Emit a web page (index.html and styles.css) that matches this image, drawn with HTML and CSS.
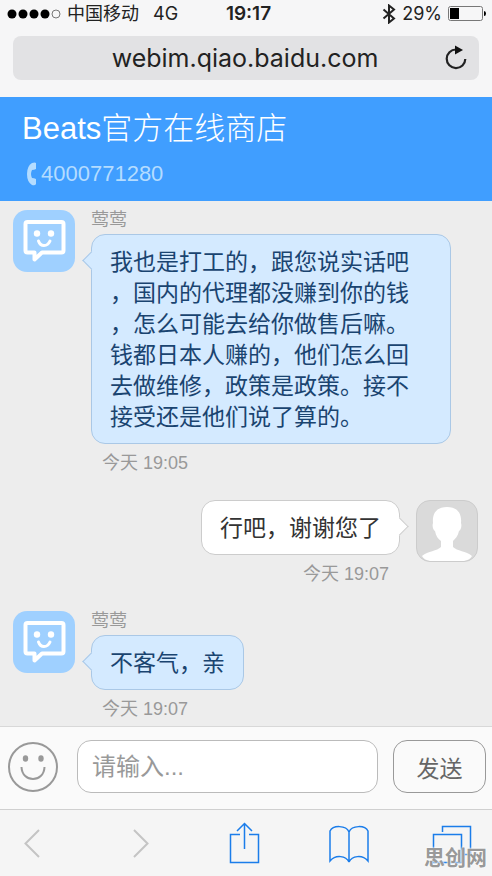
FILE: index.html
```html
<!DOCTYPE html>
<html lang="zh-CN">
<head>
<meta charset="utf-8">
<meta name="viewport" content="width=device-width, initial-scale=1">
<title>Beats官方在线商店</title>
<link rel="stylesheet" href="styles.css">
</head>
<body>
<svg class="defs" width="0" height="0" aria-hidden="true">
  <symbol id="bot" viewBox="0 0 62 62">
    <path d="M14.500 12H48.500Q50.500 12 50.500 14V40.500Q50.500 42.500 48.500 42.500H29L21.500 49.500V42.500H14.500Q12.500 42.500 12.500 40.500V14Q12.500 12 14.500 12Z" fill="none" stroke="#fff" stroke-width="4" stroke-linejoin="round"/>
    <circle cx="24" cy="23.500" r="3.200" fill="#fff"/>
    <circle cx="38" cy="23.500" r="3.200" fill="#fff"/>
    <path d="M25.500 31Q27 35.500 31 35.500T37 31" fill="none" stroke="#fff" stroke-width="3" stroke-linecap="round"/>
  </symbol>
</svg>

<div class="status">
  <div class="carrier">
    <svg width="54" height="12" viewBox="0 0 54 12" aria-hidden="true">
      <circle cx="5" cy="6" r="4.500"/><circle cx="16" cy="6" r="4.500"/><circle cx="27" cy="6" r="4.500"/><circle cx="38" cy="6" r="4.500"/>
      <circle cx="49" cy="6" r="4" fill="none" stroke="#777"/>
    </svg>
    <span>中国移动</span><span class="network">4G</span>
  </div>
  <time class="clock">19:17</time>
  <div class="power">
    <svg width="14" height="20" viewBox="0 0 14 20" aria-hidden="true"><path d="M1.500 5.500L12 14.500L7 18.500V1.500L12 5.500L1.500 14.500" fill="none" stroke="#222" stroke-width="2"/></svg>
    <span>29%</span>
    <svg width="38" height="16" viewBox="0 0 38 16" aria-hidden="true"><rect x=".5" y=".5" width="34" height="14" rx="2" fill="none" stroke="#777"/><rect x="2" y="2" width="9" height="11"/><path d="M36 5Q38 5 38 7.500T36 10Z"/></svg>
  </div>
</div>

<div class="address">
  <span class="url">webim.qiao.baidu.com</span>
  <button class="icon-button" type="button" aria-label="刷新">
    <svg width="24" height="26" viewBox="0 0 24 26"><path d="M12 4.500A9.300 9.300 0 1 0 21.300 14" fill="none" stroke="#222" stroke-width="2.200"/><path d="M11 .5L19 5L11 9.500Z" fill="#111"/></svg>
  </button>
</div>

<header class="shop">
  <h1>Beats官方在线商店</h1>
  <a class="phone" href="tel:4000771280"><svg width="11" height="24" viewBox="0 0 11 24" aria-hidden="true"><path d="M6 1Q9 0 10 1V7Q8 8 6 8Q4 12 6 16Q8 16 10 17V22Q9 24 6 23Q1 20 1 12T6 1Z" fill="#b4dcff"/></svg>4000771280</a>
</header>

<main class="chat">
  <article class="message">
    <div class="avatar"><svg width="62" height="62" aria-hidden="true"><use href="#bot"/></svg></div>
    <div class="content">
      <div class="name">莺莺</div>
      <div class="bubble">我也是打工的，跟您说实话吧<br>，国内的代理都没赚到你的钱<br>，怎么可能去给你做售后嘛。<br>钱都日本人赚的，他们怎么回<br>去做维修，政策是政策。接不<br>接受还是他们说了算的。</div>
      <time class="sent">今天 19:05</time>
    </div>
  </article>
  <article class="message mine">
    <div class="avatar"><svg width="60" height="60" viewBox="0 0 60 60" aria-hidden="true"><path d="M30 6C40 6 45 12 44 22C45 25 44 29 42 30C41 35 38 38 36 40V46C40 50 49 50 55 55Q53 59 47 60H13Q7 59 5 55C11 50 20 50 24 46V40C21 38 19 35 18 30C16 29 15 25 16 22C15 12 20 6 30 6Z" fill="#fff"/></svg></div>
    <div class="content">
      <div class="bubble">行吧，谢谢您了</div>
      <time class="sent">今天 19:07</time>
    </div>
  </article>
  <article class="message">
    <div class="avatar"><svg width="62" height="62" aria-hidden="true"><use href="#bot"/></svg></div>
    <div class="content">
      <div class="name">莺莺</div>
      <div class="bubble">不客气，亲</div>
      <time class="sent">今天 19:07</time>
    </div>
  </article>
</main>

<form class="composer">
  <button class="icon-button" type="button" aria-label="表情">
    <svg width="50" height="50" viewBox="0 0 50 50"><g fill="none" stroke="#999" stroke-width="2"><circle cx="25" cy="25" r="24"/><path d="M13.500 25C14 41 36 41 36.500 25"/></g><ellipse cx="17.500" cy="16.500" rx="2.700" ry="3.300" fill="#999"/><ellipse cx="33" cy="16.500" rx="2.700" ry="3.300" fill="#999"/></svg>
  </button>
  <input class="field" type="text" placeholder="请输入..." aria-label="请输入">
  <button class="send" type="submit">发送</button>
</form>

<nav class="toolbar">
  <button class="icon-button" type="button" aria-label="后退"><svg width="64" height="44" viewBox="0 0 64 44"><path d="M39 9L25.500 22.500L39 36" fill="none" stroke="#c4c4c4" stroke-width="2"/></svg></button>
  <button class="icon-button" type="button" aria-label="前进"><svg width="64" height="44" viewBox="0 0 64 44"><path d="M29 9L42.500 22.500L29 36" fill="none" stroke="#c4c4c4" stroke-width="2"/></svg></button>
  <button class="icon-button" type="button" aria-label="分享"><svg width="64" height="44" viewBox="-19 0 64 44"><path d="M11 13.500H1.500V41.500H29.500V13.500H20M15.500 28V3M8 10L15.500 2.500L23 10" fill="none" stroke="#1b7dea" stroke-width="1.500"/></svg></button>
  <button class="icon-button" type="button" aria-label="书签"><svg width="64" height="44" viewBox="-14 0 64 44"><path d="M20 11V41C17 35 7 33 1 40V10C4 4 17 4 20 11C23 4 36 4 39 10V40C33 33 23 35 20 41" fill="none" stroke="#1b7dea" stroke-width="1.500"/></svg></button>
  <button class="icon-button" type="button" aria-label="标签页"><svg width="64" height="44" viewBox="-12 0 64 44"><path d="M1.500 13.500H29.500V41.500H1.500ZM10.500 11V5.500H38.500V33.500H32" fill="none" stroke="#1b7dea" stroke-width="1.500"/></svg></button>
  <span class="watermark">思创网</span>
</nav>
</body>
</html>
```
FILE: styles.css
```css
* { box-sizing: border-box; }

body {
  margin: 0;
  min-height: 100vh;
  display: flex;
  flex-direction: column;
  background: #f6f6f7;
  color: #222;
  font-family: "Liberation Sans", "Noto Sans CJK SC", sans-serif;
}

button, input { font: inherit; }
svg { display: block; flex: none; }
.defs { position: absolute; }

.icon-button {
  display: block;
  padding: 0;
  border: 0;
  background: none;
}

.status {
  display: grid;
  grid-template-columns: 1fr auto 1fr;
  align-items: center;
  height: 28px;
  padding: 0 6px 0 7px;
  font: 18px/28px Inter, "Noto Sans CJK SC", sans-serif;
}

.carrier, .power { display: flex; align-items: center; gap: 6px; }
.power { justify-content: flex-end; }
.network { margin-left: 8px; }
.clock { padding-left: 4px; font-size: 19px; font-weight: 600; }

.address {
  display: flex;
  align-items: center;
  height: 44px;
  margin: 8px 13px 17px;
  padding: 0 11px 0 33px;
  border-radius: 8px;
  background: #e2e2e4;
}

.url {
  flex: 1;
  text-align: center;
  font: 25px/44px Inter, sans-serif;
}

.shop {
  height: 104px;
  padding: 12px 22px;
  background: #409eff;
  color: #fff;
}

.shop h1 {
  margin: 0;
  font-size: 31px;
  line-height: 40px;
  font-weight: 300;
}

.phone {
  display: flex;
  align-items: center;
  gap: 4px;
  margin-top: 12px;
  padding-left: 4px;
  color: #b4dcff;
  font-size: 22px;
  line-height: 26px;
  text-decoration: none;
}

.chat {
  flex: 1;
  display: flex;
  flex-direction: column;
  gap: 24px;
  padding: 9px 14px 4px 13px;
  background: #ededed;
}

.message { display: flex; gap: 16px; }
.message.mine { flex-direction: row-reverse; }

.avatar {
  flex: none;
  width: 62px;
  height: 62px;
  border-radius: 14px;
  overflow: hidden;
  background: #9fd0ff;
}

.mine .avatar { border: 1px solid #ccc; background: #dadada; }

.content {
  flex: 1;
  display: flex;
  flex-direction: column;
  align-items: flex-start;
}

.mine .content { align-items: flex-end; }

.name { height: 24px; color: #999; font-size: 18px; line-height: 20px; }

.bubble {
  position: relative;
  max-width: 361px;
  padding: 12px 18px 10px;
  border: 1px solid #aac8e6;
  border-radius: 14px;
  background: #d4eaff;
  color: #1a4470;
  font-size: 23px;
  line-height: 31px;
}

.message:first-child .bubble { padding-right: 41px; }

/* Speech tail: a rotated square with two visible edges */
.bubble::before {
  content: "";
  position: absolute;
  top: 19px;
  left: -7px;
  width: 12px;
  height: 12px;
  border: solid #aac8e6;
  border-width: 0 0 1px 1px;
  background: #d4eaff;
  transform: rotate(45deg);
}

.mine .bubble { border-color: #ccc; background: #fff; color: #333; }

.mine .bubble::before {
  left: auto;
  right: -7px;
  border-color: #ccc;
  border-width: 1px 1px 0 0;
  background: #fff;
}

.sent {
  padding: 6px 11px 0;
  color: #999;
  font-size: 18px;
  line-height: 26px;
}

.composer {
  display: flex;
  align-items: center;
  height: 83px;
  padding: 0 6px 3px 8px;
  border-top: 1px solid #d8d8d8;
  background: #fafafa;
}

.field {
  flex: 1;
  min-width: 0;
  height: 53px;
  margin: 0 15px 0 19px;
  padding: 0 14px;
  border: 1px solid #bbb;
  border-radius: 14px;
  background: #fff;
  font-size: 24px;
}

.field::placeholder { color: #999; opacity: 1; }

.send {
  width: 93px;
  height: 53px;
  padding: 0;
  border: 1px solid #999;
  border-radius: 14px;
  background: #fafafa;
  color: #666;
  font-size: 23px;
}

.toolbar {
  position: relative;
  display: flex;
  justify-content: space-between;
  align-items: center;
  height: 67px;
  padding-right: 8px;
  border-top: 1px solid #d0d0d0;
  background: #f5f5f5;
}

.watermark {
  position: absolute;
  right: 5px;
  bottom: 4px;
  color: #999;
  font-size: 21px;
  line-height: 28px;
  font-weight: 700;
  text-shadow: 0 0 2px #fff, 0 0 2px #fff;
}
```
